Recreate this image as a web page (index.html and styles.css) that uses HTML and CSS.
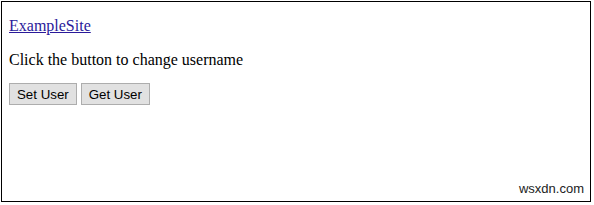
FILE: index.html
```html
<!DOCTYPE html>
<html>
<head>
<meta charset="utf-8">
<link rel="stylesheet" href="styles.css">
</head>
<body>
<div class="frame">
  <p class="line first"><a href="#">ExampleSite</a></p>
  <p class="line">Click the button to change username</p>
  <div class="buttons">
    <button class="btn">Set User</button>
    <button class="btn">Get User</button>
  </div>
  <div class="mark">wsxdn.com</div>
</div>
</body>
</html>
```
FILE: styles.css
```css
html, body {
  margin: 0;
  padding: 0;
  background: #fff;
}
.frame {
  margin: 1px;
  height: 199px;
  border: 1px solid #000;
  box-sizing: content-box;
  font-family: "Liberation Serif", serif;
  font-size: 16px;
  color: #000;
  display: flex;
  flex-direction: column;
  padding-left: 7px;
  width: 581px;
}
.line {
  margin: 0;
  line-height: 19px;
}
.line.first {
  margin-top: 14px;
  margin-bottom: 15px;
}
.line a {
  color: #2a1a9a;
}
.buttons {
  display: flex;
  gap: 4px;
  margin-top: 14px;
}
.btn {
  font-family: "Liberation Sans", Arial, sans-serif;
  font-size: 13.3px;
  height: 22px;
  padding: 0 7px;
  border: 1px solid #adadad;
  background: #e1e1e1;
  color: #000;
  border-radius: 0;
  margin: 0;
}
.mark {
  margin-top: auto;
  align-self: flex-end;
  font-family: "Liberation Sans", Arial, sans-serif;
  font-size: 13px;
  color: #222;
  margin-right: 6px;
  margin-bottom: 5px;
}
```
